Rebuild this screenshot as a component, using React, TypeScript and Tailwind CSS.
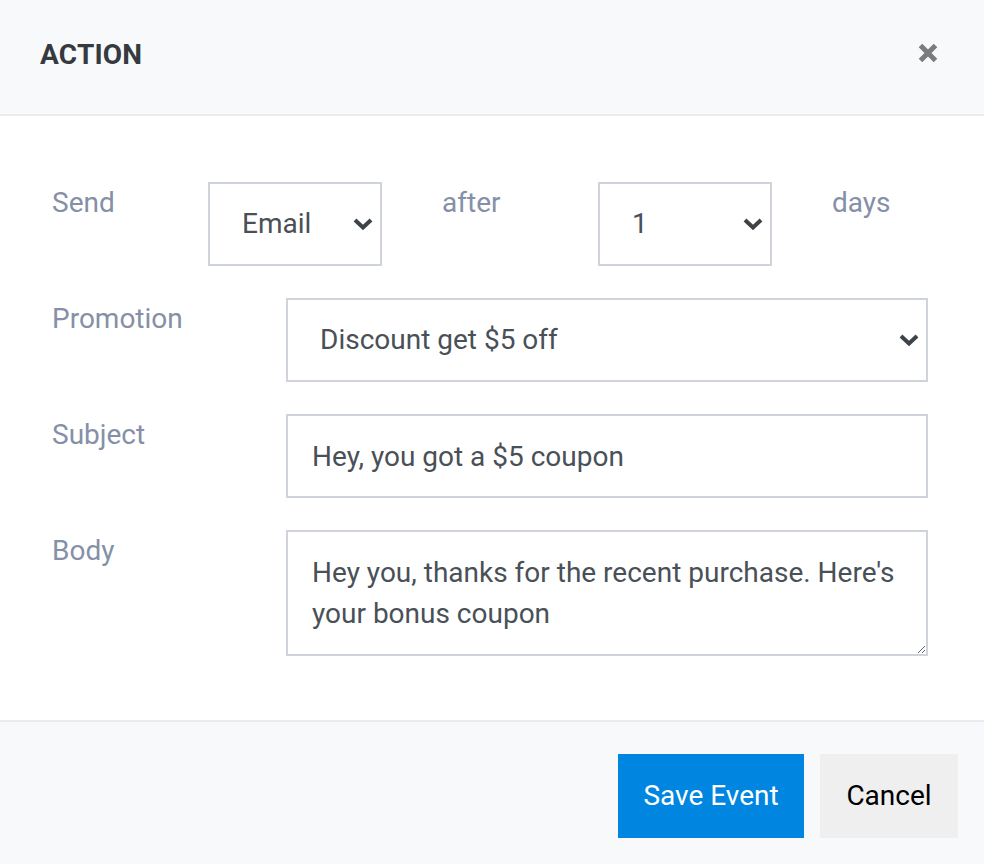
import React from "react";

const Chevron = () => (
  <svg
    width="20"
    height="12"
    viewBox="0 0 20 12"
    className="pointer-events-none absolute right-[9px] top-1/2 -translate-y-1/2"
  >
    <path d="M2 2 L10 9.5 L18 2" fill="none" stroke="#3d4349" strokeWidth="4" strokeLinejoin="miter" />
  </svg>
);

function Select({ value, options, className }: { value: string; options: string[]; className?: string }) {
  return (
    <div className={"relative " + (className ?? "")}>
      <select
        defaultValue={value}
        className="h-[84px] w-full appearance-none rounded-none border-2 border-[#ced4da] bg-white pl-[32px] pr-[40px] text-[28px] leading-[42px] text-[#495057] outline-none"
      >
        {options.map((o) => (
          <option key={o} value={o}>
            {o}
          </option>
        ))}
      </select>
      <Chevron />
    </div>
  );
}

const Label = ({ children }: { children: React.ReactNode }) => (
  <div className="text-[28px] leading-[42px] text-[#8590a8]">{children}</div>
);

export default function App() {
  return (
    <div
      className="flex h-[864px] w-[984px] flex-col bg-white"
      style={{ fontFamily: "Roboto, 'Liberation Sans', sans-serif" }}
    >
      {/* Header */}
      <div className="flex h-[116px] shrink-0 items-center justify-between border-b-2 border-[#e9ebee] bg-[#f8f9fa] pb-[4px] pl-[40px] pr-[46px]">
        <div className="text-[28px] font-bold leading-none tracking-[0.2px] text-[#343a40]">ACTION</div>
        <svg width="20" height="20" viewBox="0 0 20 20" className="mt-[-4px]">
          <path d="M2.5 2.5 L17.5 17.5 M17.5 2.5 L2.5 17.5" stroke="#7b7b7b" strokeWidth="5" />
        </svg>
      </div>

      {/* Body */}
      <div className="flex flex-1 flex-col gap-[32px] px-[22px] pt-[66px]">
        {/* Row 1 */}
        <div className="flex">
          <div className="w-[156px] px-[30px]">
            <Label>Send</Label>
          </div>
          <div className="w-[234px] px-[30px]">
            <Select value="Email" options={["Email", "SMS"]} />
          </div>
          <div className="w-[156px] px-[30px]">
            <Label>after</Label>
          </div>
          <div className="w-[234px] px-[30px]">
            <Select value="1" options={["1", "2", "3", "5", "7"]} />
          </div>
          <div className="w-[156px] px-[30px]">
            <Label>days</Label>
          </div>
        </div>

        {/* Promotion */}
        <div className="flex">
          <div className="w-[234px] px-[30px]">
            <Label>Promotion</Label>
          </div>
          <div className="w-[702px] px-[30px]">
            <Select value="Discount get $5 off" options={["Discount get $5 off", "Free shipping"]} />
          </div>
        </div>

        {/* Subject */}
        <div className="flex">
          <div className="w-[234px] px-[30px]">
            <Label>Subject</Label>
          </div>
          <div className="w-[702px] px-[30px]">
            <input
              defaultValue="Hey, you got a $5 coupon"
              className="h-[84px] w-full border-2 border-[#ced4da] bg-white px-[24px] text-[28px] leading-[42px] text-[#495057] outline-none"
            />
          </div>
        </div>

        {/* Body */}
        <div className="flex">
          <div className="w-[234px] px-[30px]">
            <Label>Body</Label>
          </div>
          <div className="w-[702px] px-[30px]">
            <textarea
              defaultValue="Hey you, thanks for the recent purchase. Here's your bonus coupon"
              className="block h-[126px] w-full resize-y border-2 border-[#ced4da] bg-white px-[24px] pb-[19px] pt-[20px] text-[28px] leading-[41px] text-[#495057] outline-none"
            />
          </div>
        </div>
      </div>

      {/* Footer */}
      <div className="flex h-[144px] shrink-0 items-start justify-end gap-[16px] border-t-2 border-[#e9ebee] bg-[#f8f9fa] pr-[26px] pt-[32px]">
        <button className="h-[84px] w-[186px] bg-[#0085e1] text-[28px] text-white">Save Event</button>
        <button className="h-[84px] w-[138px] bg-[#efefef] text-[28px] text-black">Cancel</button>
      </div>
    </div>
  );
}
